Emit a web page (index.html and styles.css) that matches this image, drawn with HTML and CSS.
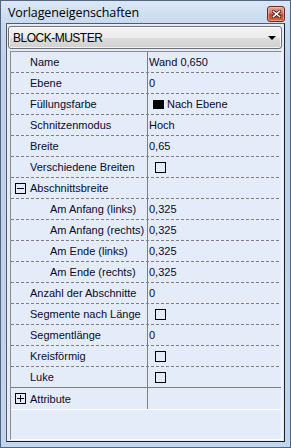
FILE: index.html
```html
<!DOCTYPE html>
<html>
<head>
<meta charset="utf-8">
<link rel="stylesheet" href="styles.css">
</head>
<body>
<div class="window">
  <div class="titlebar">
    <span class="title">Vorlageneigenschaften</span>
    <span class="close">
      <svg width="9" height="8" viewBox="0 0 9 8"><path d="M1.5 1.5 L7.5 6.5 M7.5 1.5 L1.5 6.5" stroke="#3a1010" stroke-width="3.2" stroke-linecap="square"/><path d="M1.5 1.5 L7.5 6.5 M7.5 1.5 L1.5 6.5" stroke="#ffffff" stroke-width="1.6" stroke-linecap="square"/></svg>
    </span>
  </div>
  <div class="client">
    <div class="combo">
      <span class="combo-text">BLOCK-MUSTER</span>
      <span class="combo-arrow"></span>
    </div>
    <div class="grid">
      <div class="row"><div class="name">Name</div><div class="value">Wand 0,650</div></div>
      <div class="row"><div class="name">Ebene</div><div class="value">0</div></div>
      <div class="row"><div class="name">Füllungsfarbe</div><div class="value"><span class="swatch"></span>Nach Ebene</div></div>
      <div class="row"><div class="name">Schnitzenmodus</div><div class="value">Hoch</div></div>
      <div class="row"><div class="name">Breite</div><div class="value">0,65</div></div>
      <div class="row"><div class="name">Verschiedene Breiten</div><div class="value"><span class="check"></span></div></div>
      <div class="row"><div class="name cat"><span class="toggle minus"></span>Abschnittsbreite</div><div class="value"></div></div>
      <div class="row"><div class="name sub">Am Anfang (links)</div><div class="value">0,325</div></div>
      <div class="row"><div class="name sub">Am Anfang (rechts)</div><div class="value">0,325</div></div>
      <div class="row"><div class="name sub">Am Ende (links)</div><div class="value">0,325</div></div>
      <div class="row"><div class="name sub">Am Ende (rechts)</div><div class="value">0,325</div></div>
      <div class="row"><div class="name">Anzahl der Abschnitte</div><div class="value">0</div></div>
      <div class="row"><div class="name">Segmente nach Länge</div><div class="value"><span class="check"></span></div></div>
      <div class="row"><div class="name">Segmentlänge</div><div class="value">0</div></div>
      <div class="row"><div class="name">Kreisförmig</div><div class="value"><span class="check"></span></div></div>
      <div class="row solid"><div class="name">Luke</div><div class="value"><span class="check"></span></div></div>
      <div class="row last"><div class="name cat"><span class="toggle plus"></span>Attribute</div><div class="value"></div></div>
    </div>
  </div>
</div>
</body>
</html>
```

FILE: styles.css
```css
* { box-sizing: border-box; }
html, body { margin: 0; padding: 0; }
body { width: 291px; height: 448px; overflow: hidden; }

.window {
  width: 291px;
  height: 448px;
  border: 1px solid #52667e;
  background: linear-gradient(to bottom, #dbe7f6 0px, #c7daf0 22px, #bcd2ed 60px, #c0d5ee 100%);
  display: flex;
  flex-direction: column;
}

.titlebar {
  height: 22px;
  display: flex;
  align-items: center;
  justify-content: space-between;
  padding: 0 5px 0 7px;
}
.title {
  font-family: "Open Sans", sans-serif;
  font-size: 12.5px;
  color: #000;
  letter-spacing: -0.1px;
  margin-top: 1px;
}
.close {
  width: 18px;
  height: 16px;
  margin-top: 3px;
  border: 1px solid #6e2a1c;
  border-radius: 3px;
  background: linear-gradient(to bottom, #e8a594 0%, #d47661 45%, #c0452c 55%, #cf6a44 100%);
  display: flex;
  align-items: center;
  justify-content: center;
  box-shadow: inset 0 0 0 1px rgba(255,220,200,0.45);
}
.close svg { display: block; }

.client {
  margin: 0 5px 0 5px;
  height: 419px;
  border: 1px solid #1e1e1e;
  border-top-color: #5a5a5a;
  border-left-color: #5a5a5a;
  background: #e3ecf8;
  padding: 2px 2px 1px 1px;
  display: flex;
  flex-direction: column;
}

.combo {
  height: 23px;
  border: 1px solid #707070;
  border-radius: 3px;
  background: linear-gradient(to bottom, #f3f3f3 0%, #ececec 50%, #dddddd 51%, #d0d0d0 100%);
  box-shadow: inset 0 0 0 1px rgba(255,255,255,0.7);
  display: flex;
  align-items: center;
  justify-content: space-between;
  padding: 0 5px 0 4px;
}
.combo-text {
  font-family: "Liberation Sans", sans-serif;
  font-size: 12px;
  letter-spacing: -0.5px;
  color: #000;
}
.combo-arrow {
  width: 0;
  height: 0;
  border-left: 4px solid transparent;
  border-right: 4px solid transparent;
  border-top: 4px solid #000;
  margin-top: 1px;
}

.grid {
  margin: 2px 0 0 2px;
  height: 389px;
  border-left: 1px solid #8c8c8c;
  border-top: 1px solid #8c8c8c;
  border-right: 1px solid #ffffff;
  border-bottom: 1px solid #ffffff;
  background: #e3ecf8;
  font-family: "Liberation Sans", sans-serif;
  font-size: 11px;
  color: #0a0a2e;
}

.row {
  display: flex;
  height: 21px;
  padding-bottom: 1px;
  background-image: repeating-linear-gradient(to right, #7f7f7f 0px, #7f7f7f 3px, transparent 3px, transparent 5px);
  background-size: 100% 1px;
  background-repeat: no-repeat;
  background-position: left bottom;
}
.row.solid {
  background-image: linear-gradient(#7f7f7f, #7f7f7f);
}
.row.last {
  background-image: linear-gradient(#ffffff, #ffffff);
  height: 22px;
}

.name {
  width: 137px;
  border-right: 1px solid #7f7f7f;
  padding-left: 19px;
  display: flex;
  align-items: center;
  white-space: nowrap;
  overflow: hidden;
}
.name.sub { padding-left: 39px; }
.name.cat { padding-left: 4px; }

.value {
  flex: 1;
  padding-left: 1px;
  display: flex;
  align-items: center;
  white-space: nowrap;
}

.toggle {
  width: 11px;
  height: 11px;
  border: 1px solid #000;
  margin-right: 4px;
  position: relative;
  flex: none;
}
.toggle::before {
  content: "";
  position: absolute;
  left: 1px;
  top: 4px;
  width: 7px;
  height: 1px;
  background: #000;
}
.toggle.plus::after {
  content: "";
  position: absolute;
  left: 4px;
  top: 1px;
  width: 1px;
  height: 7px;
  background: #000;
}

.check {
  width: 11px;
  height: 11px;
  border: 1px solid #000;
  margin-left: 6px;
  margin-top: 1px;
}
.swatch {
  width: 11px;
  height: 9px;
  background: #000;
  margin: 0 3px 0 4px;
}
```
